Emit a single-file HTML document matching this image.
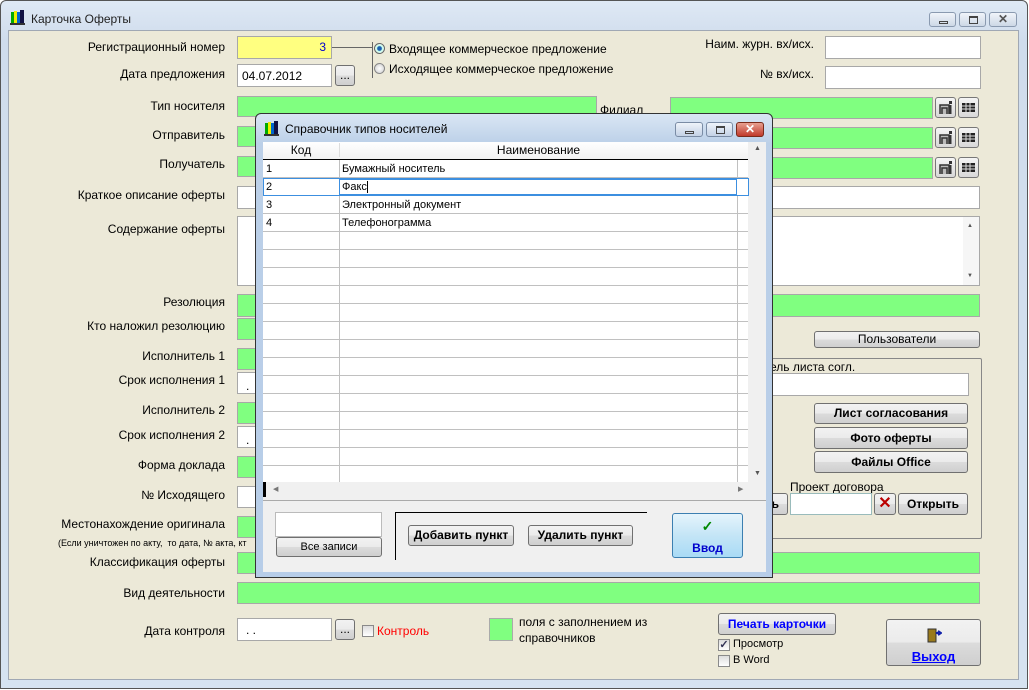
<!DOCTYPE html>
<html><head><meta charset="utf-8"><style>
*{box-sizing:border-box;margin:0;padding:0}
body{width:1029px;height:690px;position:relative;overflow:hidden;background:#fff;font-family:"Liberation Sans",Arial,sans-serif;font-size:12px;color:#000}
.a{position:absolute}
.lbl{position:absolute;text-align:right;width:225px;left:0;font-size:12px}
.f{position:absolute;border:1px solid #a8a8a8;background:#fff}
.g{background:#80ff80}
.btn{position:absolute;border:1px solid #707070;border-radius:3px;background:linear-gradient(#f2f2f2,#ebebeb 50%,#dcdcdc 50%,#cfcfcf);text-align:center;font-size:12px}
.b{font-weight:bold}
.ic{position:absolute;width:21px;height:21px;border:1px solid #777;border-radius:3px;background:linear-gradient(#f5f5f5,#d8d8d8)}
.cb{position:absolute;width:12px;height:12px;border:1px solid #8a8a8a;background:linear-gradient(#ddd,#fff)}
</style></head><body>
<!-- outer window -->
<div class="a" style="left:0;top:0;width:1028px;height:689px;border:1px solid #555;border-radius:6px 6px 0 0;background:linear-gradient(#dfe9f5,#cfdcec 40px,#d6e3f1)"></div>
<div class="a" style="left:10px;top:9px;width:14px;height:16px">
<svg width="16" height="16"><rect x="1" y="3" width="3" height="12" fill="#0a0"/><rect x="4" y="2" width="3" height="13" fill="#ee0"/><rect x="7" y="3" width="3" height="12" fill="#06c"/><rect x="10" y="1" width="4" height="14" fill="#114"/><rect x="0" y="14" width="15" height="2" fill="#333"/></svg></div>
<div class="a" style="left:31px;top:12px;font-size:12px;color:#222">Карточка Оферты</div>
<div class="a" style="left:929px;top:12px;width:27px;height:15px;border:1px solid #8a9ab0;border-radius:3px;background:linear-gradient(#f0f4fa,#cdd8e6)"><div class="a" style="left:9px;top:8px;width:9px;height:3px;border:1px solid #444"></div></div>
<div class="a" style="left:959px;top:12px;width:27px;height:15px;border:1px solid #8a9ab0;border-radius:3px;background:linear-gradient(#f0f4fa,#cdd8e6)"><div class="a" style="left:9px;top:3px;width:9px;height:8px;border:1px solid #444;border-top-width:2px"></div></div>
<div class="a" style="left:989px;top:12px;width:28px;height:15px;border:1px solid #8a9ab0;border-radius:3px;background:linear-gradient(#f0f4fa,#cdd8e6);text-align:center;font-size:12px;line-height:13px;color:#555;font-weight:bold">✕</div>
<div class="a" style="left:8px;top:30px;width:1011px;height:650px;background:#ece9d8;border:1px solid #a0a8b4"></div>

<!-- left labels -->
<div class="lbl" style="top:40px">Регистрационный номер</div>
<div class="lbl" style="top:67px">Дата предложения</div>
<div class="lbl" style="top:99px">Тип носителя</div>
<div class="lbl" style="top:128px">Отправитель</div>
<div class="lbl" style="top:157px">Получатель</div>
<div class="lbl" style="top:188px">Краткое описание оферты</div>
<div class="lbl" style="top:222px">Содержание оферты</div>
<div class="lbl" style="top:295px">Резолюция</div>
<div class="lbl" style="top:319px">Кто наложил резолюцию</div>
<div class="lbl" style="top:349px">Исполнитель 1</div>
<div class="lbl" style="top:373px">Срок исполнения 1</div>
<div class="lbl" style="top:403px">Исполнитель 2</div>
<div class="lbl" style="top:428px">Срок исполнения 2</div>
<div class="lbl" style="top:458px">Форма доклада</div>
<div class="lbl" style="top:488px">№ Исходящего</div>
<div class="lbl" style="top:517px">Местонахождение оригинала</div>
<div class="a" style="left:58px;top:538px;font-size:9px;white-space:nowrap">(Если уничтожен по акту,&nbsp; то дата, № акта, кт</div>
<div class="lbl" style="top:555px">Классификация оферты</div>
<div class="lbl" style="top:586px">Вид деятельности</div>
<div class="lbl" style="top:624px">Дата контроля</div>

<!-- left fields -->
<div class="f" style="left:237px;top:36px;width:95px;height:23px;background:#ffff80;text-align:right;padding:3px 5px;color:#00c">3</div>
<div class="a" style="left:332px;top:47px;width:40px;border-top:1px solid #666"></div>
<div class="a" style="left:372px;top:42px;height:36px;border-left:1px solid #666"></div>
<div class="f" style="left:237px;top:64px;width:95px;height:23px;padding:4px 4px">04.07.2012</div>
<div class="btn" style="left:335px;top:65px;width:20px;height:21px;line-height:18px">...</div>
<div class="a" style="left:374px;top:43px;width:11px;height:11px;border-radius:50%;border:1px solid #666;background:radial-gradient(#1b5fb0 30%,#cfe 45%,#eee)"></div>
<div class="a" style="left:389px;top:42px;font-size:12px">Входящее коммерческое предложение</div>
<div class="a" style="left:374px;top:63px;width:11px;height:11px;border-radius:50%;border:1px solid #888;background:radial-gradient(#fff,#ccc)"></div>
<div class="a" style="left:389px;top:62px;font-size:12px">Исходящее коммерческое предложение</div>

<div class="f g" style="left:237px;top:96px;width:360px;height:21px"></div>
<div class="f g" style="left:237px;top:126px;width:30px;height:21px"></div>
<div class="f g" style="left:237px;top:156px;width:30px;height:21px"></div>
<div class="f" style="left:237px;top:186px;width:743px;height:23px"></div>
<div class="f" style="left:237px;top:216px;width:743px;height:70px"></div>
<div class="a" style="left:963px;top:217px;width:16px;height:68px;background:#f6f6f6"><div class="a" style="left:4px;top:6px;font-size:6px;color:#555">▲</div><div class="a" style="left:4px;top:56px;font-size:6px;color:#555">▼</div></div>
<div class="f g" style="left:237px;top:294px;width:743px;height:23px"></div>
<div class="f g" style="left:237px;top:318px;width:30px;height:22px"></div>
<div class="f g" style="left:237px;top:348px;width:30px;height:22px"></div>
<div class="f" style="left:237px;top:372px;width:30px;height:22px;padding:6px 8px">.</div>
<div class="f g" style="left:237px;top:402px;width:30px;height:22px"></div>
<div class="f" style="left:237px;top:426px;width:30px;height:22px;padding:6px 8px">.</div>
<div class="f g" style="left:237px;top:456px;width:30px;height:22px"></div>
<div class="f" style="left:237px;top:486px;width:30px;height:22px"></div>
<div class="f g" style="left:237px;top:516px;width:30px;height:22px"></div>
<div class="f g" style="left:237px;top:552px;width:743px;height:22px"></div>
<div class="f g" style="left:237px;top:582px;width:743px;height:22px"></div>
<div class="f" style="left:237px;top:618px;width:95px;height:23px;padding:4px 8px">. .</div>
<div class="btn" style="left:335px;top:619px;width:20px;height:21px;line-height:18px">...</div>
<div class="cb" style="left:362px;top:625px"></div>
<div class="a" style="left:377px;top:624px;color:#f00">Контроль</div>
<div class="a" style="left:489px;top:618px;width:24px;height:23px;background:#80ff80;border:1px solid #aaa"></div>
<div class="a" style="left:519px;top:614px;line-height:16px">поля с заполнением из<br>справочников</div>

<!-- right top -->
<div class="a" style="left:700px;top:37px;width:114px;text-align:right">Наим. журн. вх/исх.</div>
<div class="f" style="left:825px;top:36px;width:156px;height:23px"></div>
<div class="a" style="left:700px;top:67px;width:114px;text-align:right">№ вх/исх.</div>
<div class="f" style="left:825px;top:66px;width:156px;height:23px"></div>
<div class="a" style="left:600px;top:103px">Филиал</div>
<div class="f g" style="left:670px;top:97px;width:263px;height:22px"></div>
<div class="f g" style="left:670px;top:127px;width:263px;height:22px"></div>
<div class="f g" style="left:670px;top:157px;width:263px;height:22px"></div>
<div class="ic" style="left:935px;top:97px"><svg width="19" height="19" class="a" style="left:0;top:0"><path d="M4 16V7h9v9M6 16v-6h5v6" stroke="#333" stroke-width="1.5" fill="#bbb"/><rect x="13" y="3" width="3" height="3" fill="#333"/><rect x="13.5" y="7" width="2" height="9" fill="#333"/></svg></div>
<div class="ic" style="left:958px;top:97px"><svg width="19" height="19" class="a" style="left:0;top:0"><rect x="3" y="5" width="13" height="9" fill="#222"/><path d="M3 8h13M3 11h13M7 5v9M11 5v9" stroke="#ddd"/></svg></div>
<div class="ic" style="left:935px;top:127px"><svg width="19" height="19" class="a"><path d="M4 16V7h9v9M6 16v-6h5v6" stroke="#333" stroke-width="1.5" fill="#bbb"/><rect x="13" y="3" width="3" height="3" fill="#333"/><rect x="13.5" y="7" width="2" height="9" fill="#333"/></svg></div>
<div class="ic" style="left:958px;top:127px"><svg width="19" height="19" class="a"><rect x="3" y="5" width="13" height="9" fill="#222"/><path d="M3 8h13M3 11h13M7 5v9M11 5v9" stroke="#ddd"/></svg></div>
<div class="ic" style="left:935px;top:157px"><svg width="19" height="19" class="a"><path d="M4 16V7h9v9M6 16v-6h5v6" stroke="#333" stroke-width="1.5" fill="#bbb"/><rect x="13" y="3" width="3" height="3" fill="#333"/><rect x="13.5" y="7" width="2" height="9" fill="#333"/></svg></div>
<div class="ic" style="left:958px;top:157px"><svg width="19" height="19" class="a"><rect x="3" y="5" width="13" height="9" fill="#222"/><path d="M3 8h13M3 11h13M7 5v9M11 5v9" stroke="#ddd"/></svg></div>

<div class="btn" style="left:814px;top:331px;width:166px;height:17px;line-height:15px">Пользователи</div>
<div class="a" style="left:740px;top:358px;width:242px;height:181px;border:1px solid #888;border-radius:2px"></div>
<div class="a" style="left:770px;top:360px">ель листа согл.</div>
<div class="f" style="left:760px;top:373px;width:209px;height:23px"></div>
<div class="btn b" style="left:814px;top:403px;width:154px;height:21px;line-height:19px">Лист согласования</div>
<div class="btn b" style="left:814px;top:427px;width:154px;height:22px;line-height:20px">Фото оферты</div>
<div class="btn b" style="left:814px;top:451px;width:154px;height:22px;line-height:20px">Файлы Office</div>
<div class="a" style="left:790px;top:480px">Проект договора</div>
<div class="btn b" style="left:760px;top:493px;width:28px;height:22px;line-height:20px;text-align:right;padding-right:8px">ь</div>
<div class="f" style="left:790px;top:493px;width:82px;height:22px;border-color:#9bb"></div>
<div class="btn" style="left:874px;top:493px;width:22px;height:22px;line-height:20px;color:#b00;font-size:16px;font-weight:bold">✕</div>
<div class="btn b" style="left:898px;top:493px;width:70px;height:22px;line-height:20px">Открыть</div>

<div class="btn b" style="left:718px;top:613px;width:118px;height:22px;line-height:20px;color:#00f">Печать карточки</div>
<div class="cb" style="left:718px;top:639px;font-size:11px;line-height:10px;color:#335;text-align:center;font-weight:bold">✓</div>
<div class="a" style="left:733px;top:638px;font-size:11px">Просмотр</div>
<div class="cb" style="left:718px;top:655px"></div>
<div class="a" style="left:733px;top:654px;font-size:11px">В Word</div>
<div class="btn" style="left:886px;top:619px;width:95px;height:47px">
<svg width="16" height="16" class="a" style="left:39px;top:7px"><rect x="2" y="2" width="8" height="13" fill="#997a1c" stroke="#333"/><path d="M10 6h5M12 4l3 2-3 2" stroke="#12a" stroke-width="2" fill="none"/></svg>
<div class="a" style="left:0;width:93px;top:29px;color:#00f;text-decoration:underline;font-weight:bold;font-size:13px">Выход</div></div>

<!-- dialog -->
<div class="a" style="left:255px;top:113px;width:518px;height:465px;border:1px solid #333;border-radius:6px 6px 0 0;background:linear-gradient(#d9e6f4,#bcd0e8 30px,#b7cde8)"></div>
<div class="a" style="left:264px;top:120px"><svg width="16" height="16"><rect x="1" y="3" width="3" height="12" fill="#0a0"/><rect x="4" y="2" width="3" height="13" fill="#ee0"/><rect x="7" y="3" width="3" height="12" fill="#06c"/><rect x="10" y="1" width="4" height="14" fill="#114"/><rect x="0" y="14" width="15" height="2" fill="#333"/></svg></div>
<div class="a" style="left:285px;top:122px;font-size:12px">Справочник типов носителей</div>
<div class="a" style="left:675px;top:122px;width:28px;height:15px;border:1px solid #7a8ca5;border-radius:3px;background:linear-gradient(#eef3fa,#c4d2e6)"><div class="a" style="left:9px;top:8px;width:9px;height:3px;border:1px solid #444"></div></div>
<div class="a" style="left:706px;top:122px;width:27px;height:15px;border:1px solid #7a8ca5;border-radius:3px;background:linear-gradient(#eef3fa,#c4d2e6)"><div class="a" style="left:9px;top:3px;width:9px;height:8px;border:1px solid #444;border-top-width:2px"></div></div>
<div class="a" style="left:736px;top:122px;width:28px;height:15px;border:1px solid #7a2a1a;border-radius:3px;background:linear-gradient(#e8a090,#c0392b);text-align:center;color:#fff;font-weight:bold;line-height:13px;font-size:12px">✕</div>
<!-- grid -->
<div class="a" style="left:263px;top:142px;width:503px;height:358px;background:#f0f0f0"></div>
<div class="a" style="left:263px;top:142px;width:485px;height:340px;background:#fff"></div>
<div class="a" style="left:263px;top:142px;width:485px;height:18px;background:linear-gradient(#fff,#f2f2f2);border-bottom:1px solid #000"></div>
<div class="a" style="left:263px;top:143px;width:76px;text-align:center;font-size:12px">Код</div>
<div class="a" style="left:339px;top:143px;width:398px;text-align:center;font-size:12px;border-left:1px solid #ddd">Наименование</div>
<div class="a" style="left:263px;top:160px;width:485px;height:322px;background:repeating-linear-gradient(to bottom,transparent 0 17px,#c0c0c0 17px 18px)"></div>
<div class="a" style="left:339px;top:160px;height:322px;border-left:1px solid #c0c0c0"></div>
<div class="a" style="left:737px;top:160px;height:322px;border-left:1px solid #c0c0c0"></div>
<div class="a" style="left:266px;top:163px;font-size:11px">1</div><div class="a" style="left:342px;top:163px;font-size:11px">Бумажный носитель</div>
<div class="a" style="left:263px;top:178px;width:486px;height:18px;border:1px solid #3c8fe0;background:#fff"></div>
<div class="a" style="left:339px;top:179px;width:398px;height:16px;border:1px solid #3c8fe0"></div>
<div class="a" style="left:266px;top:181px;font-size:11px">2</div><div class="a" style="left:342px;top:181px;font-size:11px">Факс<span style="border-left:1px solid #000;margin-left:0"></span></div>
<div class="a" style="left:266px;top:199px;font-size:11px">3</div><div class="a" style="left:342px;top:199px;font-size:11px">Электронный документ</div>
<div class="a" style="left:266px;top:217px;font-size:11px">4</div><div class="a" style="left:342px;top:217px;font-size:11px">Телефонограмма</div>
<div class="a" style="left:754px;top:145px;font-size:7px;color:#555">▲</div>
<div class="a" style="left:754px;top:470px;font-size:7px;color:#555">▼</div>
<div class="a" style="left:263px;top:482px;width:3px;height:15px;background:#000"></div>
<div class="a" style="left:273px;top:485px;font-size:7px;color:#777">◀</div>
<div class="a" style="left:738px;top:485px;font-size:7px;color:#777">▶</div>
<!-- bottom panel -->
<div class="a" style="left:263px;top:500px;width:503px;height:72px;background:#f0f0f0;border-top:1px solid #aaa"></div>
<div class="f" style="left:275px;top:512px;width:107px;height:25px;border-color:#bbb"></div>
<div class="btn" style="left:276px;top:537px;width:106px;height:20px;line-height:18px;font-size:11px">Все записи</div>
<div class="a" style="left:395px;top:512px;width:252px;height:48px;border-left:1px solid #000;border-top:1px solid #000;background:#f0f0f0"></div>
<div class="btn b" style="left:408px;top:525px;width:106px;height:21px;line-height:19px">Добавить пункт</div>
<div class="btn b" style="left:528px;top:525px;width:105px;height:21px;line-height:19px">Удалить пункт</div>
<div class="a" style="left:672px;top:513px;width:71px;height:45px;border:1px solid #3c7fb1;border-radius:3px;background:linear-gradient(#e5f4fc,#c4e5f6 50%,#a9dbf6)">
<div class="a" style="left:0;width:69px;top:4px;text-align:center;color:#080;font-weight:bold;font-size:14px">✓</div>
<div class="a" style="left:0;width:69px;top:27px;text-align:center;color:#00c;font-weight:bold;font-size:12px">Ввод</div></div>
</body></html>
